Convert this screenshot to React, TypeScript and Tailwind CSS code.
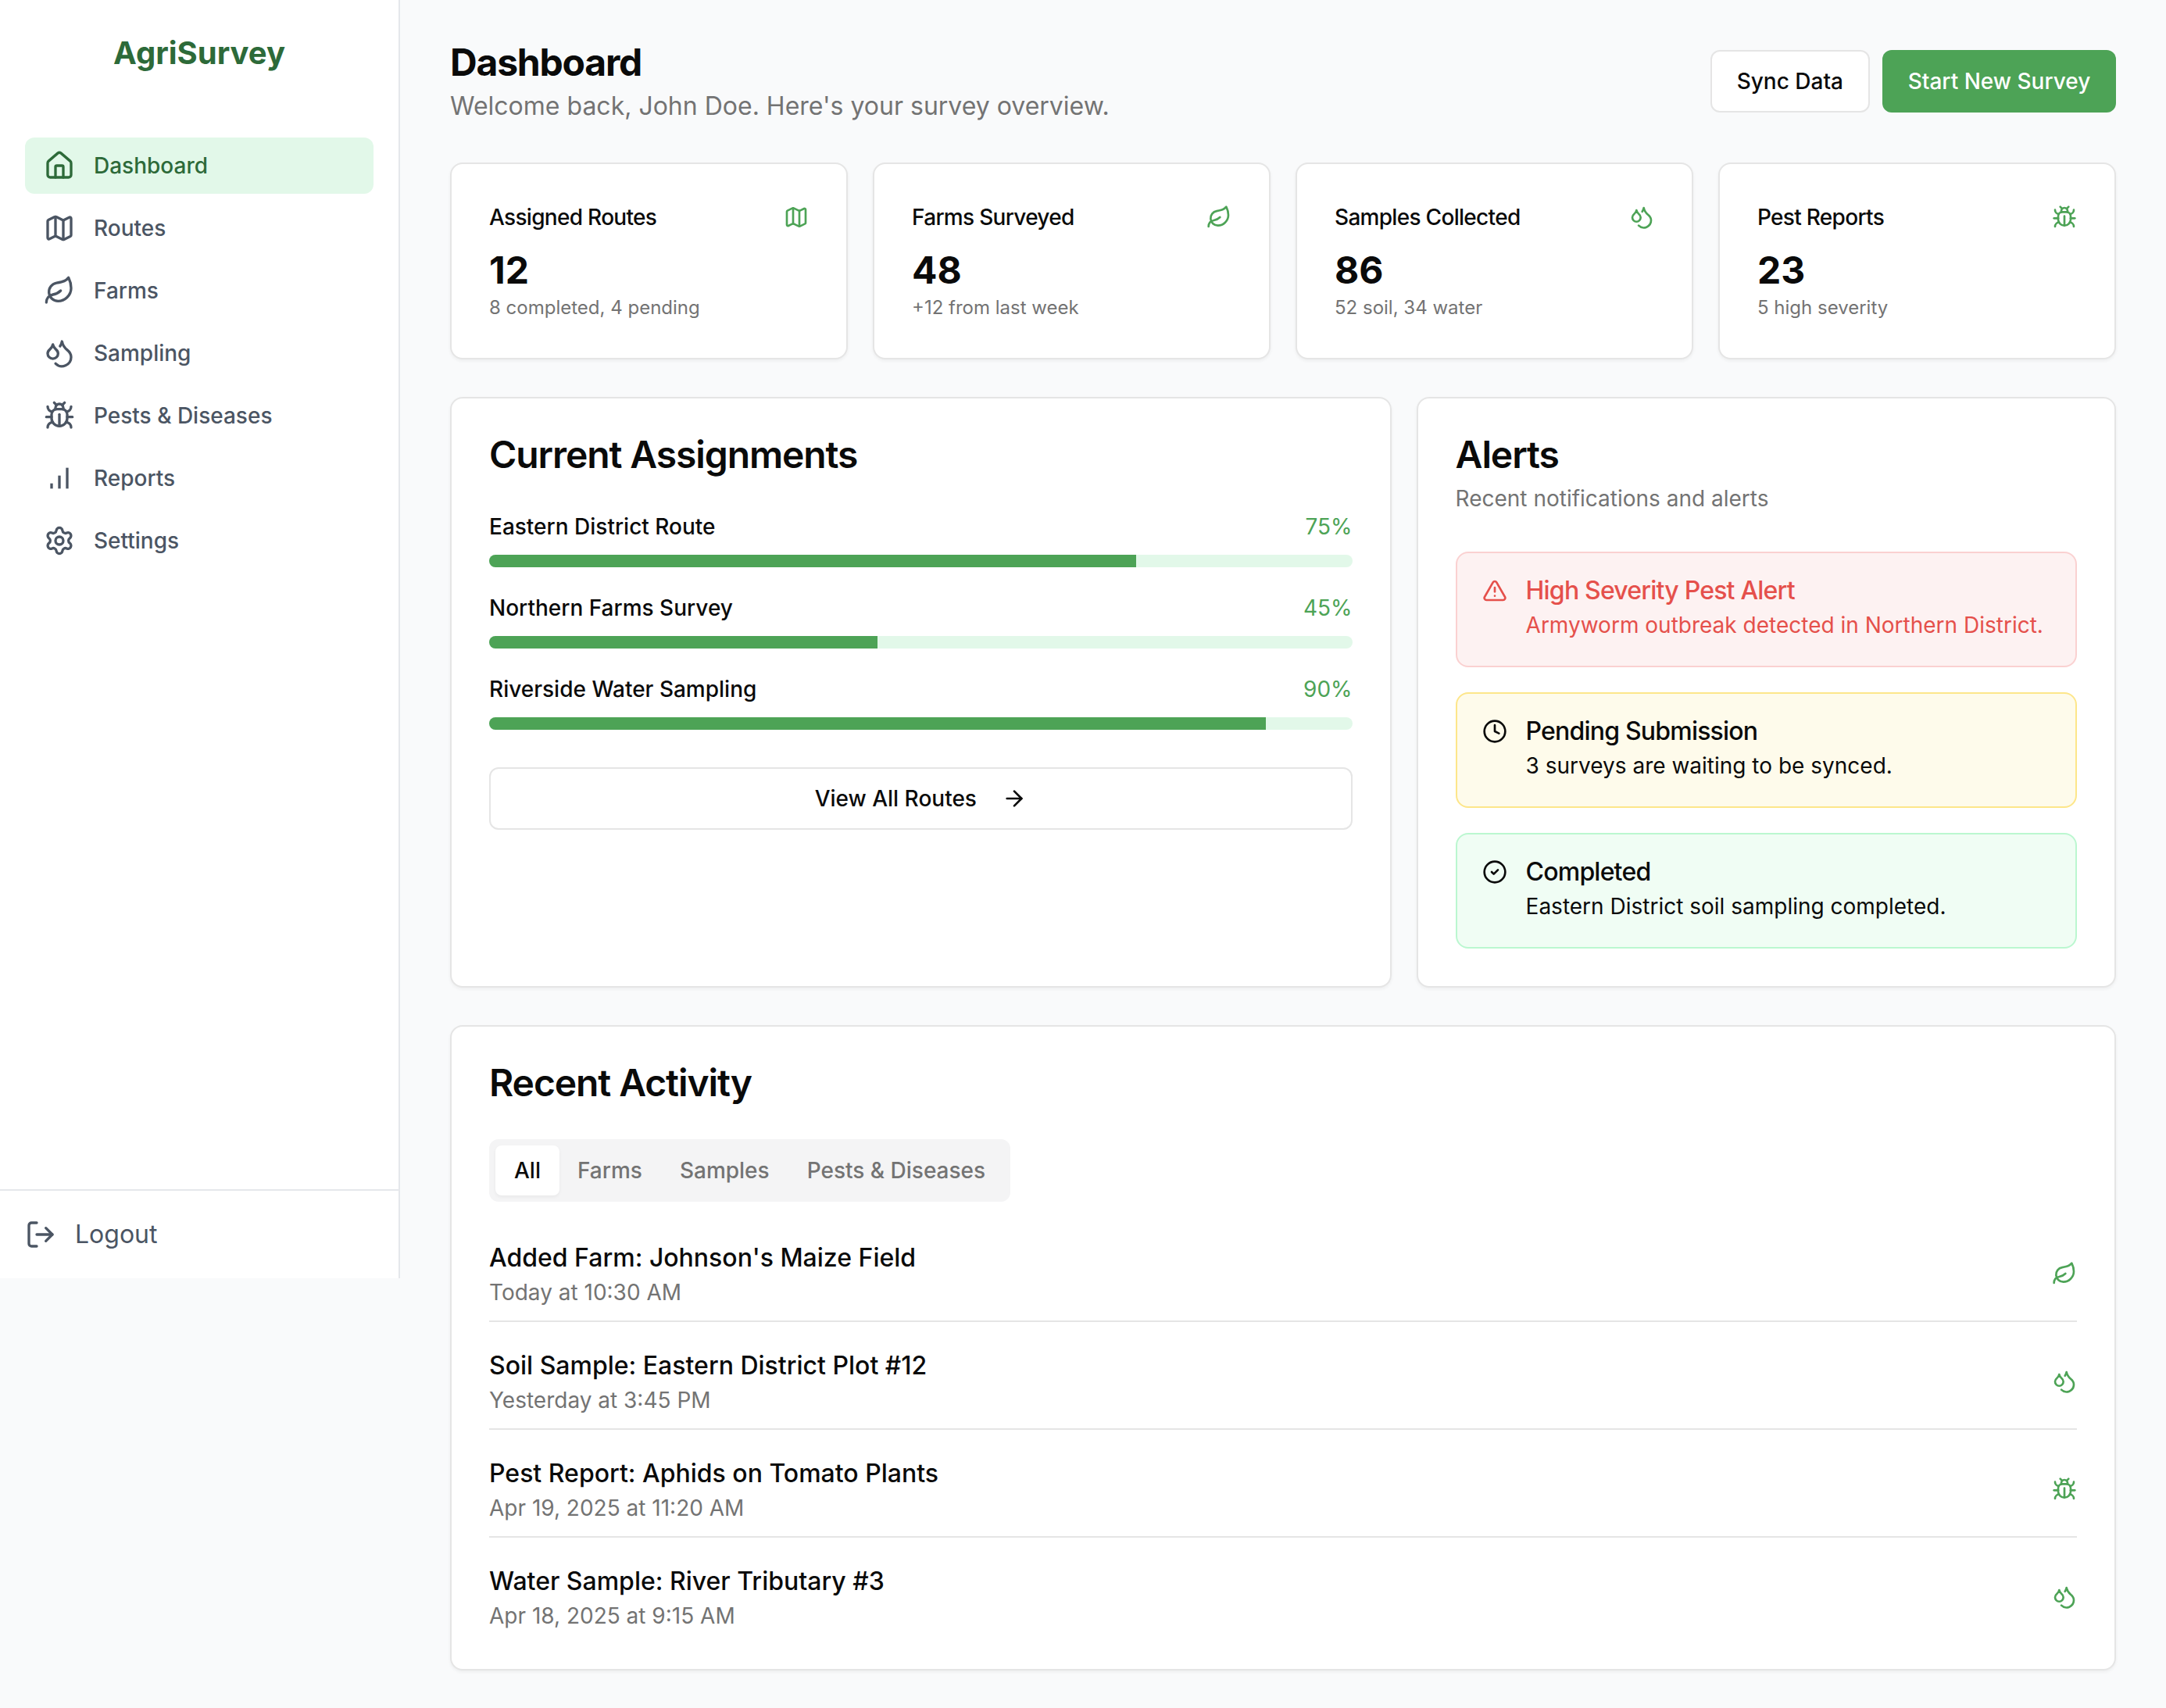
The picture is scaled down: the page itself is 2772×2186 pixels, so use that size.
import {
  ArrowRight,
  Bug,
  CircleCheck,
  Clock,
  Droplets,
  House,
  Leaf,
  LogOut,
  Map as MapIcon,
  Settings,
  TriangleAlert,
} from 'lucide-react';

// older lucide bar-chart, the three bars are x=6/12/18
function ReportsIcon({ className }: { className?: string }) {
  return (
    <svg className={className} viewBox="0 0 24 24" fill="none" stroke="currentColor" strokeWidth="2">
      <path d="M12 20V10" />
      <path d="M18 20V4" />
      <path d="M6 20v-4" />
    </svg>
  );
}

const navItems = [
  { label: 'Dashboard', icon: House, active: true },
  { label: 'Routes', icon: MapIcon },
  { label: 'Farms', icon: Leaf },
  { label: 'Sampling', icon: Droplets },
  { label: 'Pests & Diseases', icon: Bug },
  { label: 'Reports', icon: ReportsIcon },
  { label: 'Settings', icon: Settings },
];

const stats = [
  { title: 'Assigned Routes', value: '12', note: '8 completed, 4 pending', icon: MapIcon },
  { title: 'Farms Surveyed', value: '48', note: '+12 from last week', icon: Leaf },
  { title: 'Samples Collected', value: '86', note: '52 soil, 34 water', icon: Droplets },
  { title: 'Pest Reports', value: '23', note: '5 high severity', icon: Bug },
];

const assignments = [
  { name: 'Eastern District Route', progress: 75 },
  { name: 'Northern Farms Survey', progress: 45 },
  { name: 'Riverside Water Sampling', progress: 90 },
];

const activity = [
  { title: "Added Farm: Johnson's Maize Field", time: 'Today at 10:30 AM', icon: Leaf },
  { title: 'Soil Sample: Eastern District Plot #12', time: 'Yesterday at 3:45 PM', icon: Droplets },
  { title: 'Pest Report: Aphids on Tomato Plants', time: 'Apr 19, 2025 at 11:20 AM', icon: Bug },
  { title: 'Water Sample: River Tributary #3', time: 'Apr 18, 2025 at 9:15 AM', icon: Droplets },
];

function Sidebar() {
  return (
    <aside className="flex h-[1636px] w-[512px] shrink-0 flex-col border-r-2 border-[#e5e7eb] bg-white">
      <div className="pt-10 text-center text-[40px] leading-[56px] font-bold text-[#2d6a39]">AgriSurvey</div>

      <nav className="flex flex-1 flex-col gap-2 px-8 pt-20">
        {navItems.map((item) => (
          <a
            key={item.label}
            className={`flex h-[72px] items-center gap-6 rounded-xl px-6 text-[28px] leading-10 font-medium ${
              item.active ? 'bg-[#e2f8e9] text-[#2d6a39]' : 'text-[#4b5563]'
            }`}
          >
            <item.icon className="h-10 w-10" />
            {item.label}
          </a>
        ))}
      </nav>

      <div className="border-t-2 border-[#e5e7eb] p-8">
        <button className="flex h-12 items-center gap-6 text-[32px] text-[#4b5563]">
          <LogOut className="h-10 w-10" />
          Logout
        </button>
      </div>
    </aside>
  );
}

function StatCard({ title, value, note, icon: Icon }: (typeof stats)[number]) {
  return (
    <div className="rounded-2xl border-2 border-[#e5e5e5] bg-white p-12 shadow-[0_2px_4px_rgba(0,0,0,0.05)]">
      <div className="mb-4 flex items-center justify-between">
        <span className="text-[28px] leading-10 font-medium tracking-tight text-[#0a0a0a]">{title}</span>
        <Icon className="h-8 w-8 text-[#4da356]" />
      </div>
      <div className="text-[48px] leading-16 font-bold text-[#0a0a0a]">{value}</div>
      <div className="text-2xl leading-8 text-[#737373]">{note}</div>
    </div>
  );
}

function AlertBox({
  title,
  text,
  icon: Icon,
  className,
}: {
  title: string;
  text: string;
  icon: typeof Clock;
  className: string;
}) {
  return (
    <div className={`flex gap-[24px] rounded-2xl border-2 p-8 ${className}`}>
      <Icon className="h-8 w-8 shrink-0" />
      <div>
        <div className="text-[32px] leading-8 font-medium tracking-tight">{title}</div>
        <div className="mt-2 text-[28px] leading-10">{text}</div>
      </div>
    </div>
  );
}

export default function App() {
  return (
    <div className="flex min-h-[2186px] items-start bg-[#f9fafb] font-['Inter',sans-serif]">
      <Sidebar />

      <main className="min-w-0 flex-1 px-16 py-12">
        {/* Header */}
        <div className="mb-12 flex items-center justify-between">
          <div>
            <h1 className="text-[48px] leading-16 font-bold tracking-tight text-[#0a0a0a]">Dashboard</h1>
            <p className="text-[32px] leading-12 text-[#737373]">Welcome back, John Doe. Here's your survey overview.</p>
          </div>
          <div className="flex gap-4">
            <button className="h-20 rounded-xl border-2 border-[#e5e5e5] bg-white px-8 text-[28px] font-medium text-[#0a0a0a]">
              Sync Data
            </button>
            <button className="h-20 w-[299px] rounded-xl bg-[#4da356] text-[28px] font-medium text-white">Start New Survey</button>
          </div>
        </div>

        <div className="mb-12 grid grid-cols-4 gap-8">
          {stats.map((s) => (
            <StatCard key={s.title} {...s} />
          ))}
        </div>

        <div className="mb-12 grid grid-cols-7 gap-8">
          {/* Current Assignments */}
          <div className="col-span-4 rounded-2xl border-2 border-[#e5e5e5] bg-white p-12 shadow-[0_2px_4px_rgba(0,0,0,0.05)]">
            <h2 className="text-[48px] leading-12 font-semibold tracking-[-1.1px] text-[#0a0a0a]">Current Assignments</h2>
            <div className="mt-12 flex flex-col gap-8">
              {assignments.map((a) => (
                <div key={a.name}>
                  <div className="mb-4 flex justify-between text-[28px] leading-10">
                    <span className="font-medium text-[#0a0a0a]">{a.name}</span>
                    <span className="text-[#4da356]">{a.progress}%</span>
                  </div>
                  <div className="h-4 overflow-hidden rounded-full bg-[#e2f8e9]">
                    <div className="h-full bg-[#4da356]" style={{ width: `${a.progress}%` }} />
                  </div>
                </div>
              ))}
            </div>
            <button className="mt-12 flex h-20 w-full items-center justify-center gap-8 rounded-xl border-2 border-[#e5e5e5] bg-white text-[28px] font-medium text-[#0a0a0a]">
              View All Routes
              <ArrowRight className="h-8 w-8" />
            </button>
          </div>

          {/* Alerts */}
          <div className="col-span-3 rounded-2xl border-2 border-[#e5e5e5] bg-white p-12 shadow-[0_2px_4px_rgba(0,0,0,0.05)]">
            <h2 className="text-[48px] leading-12 font-semibold tracking-[-1.1px] text-[#0a0a0a]">Alerts</h2>
            <p className="mt-3 text-[28px] leading-10 text-[#737373]">Recent notifications and alerts</p>
            <div className="mt-12 flex flex-col gap-8">
              <AlertBox
                title="High Severity Pest Alert"
                text="Armyworm outbreak detected in Northern District."
                icon={TriangleAlert}
                className="border-[#fad1d1] bg-[#fdf2f2] text-[#e5504b]"
              />
              <AlertBox
                title="Pending Submission"
                text="3 surveys are waiting to be synced."
                icon={Clock}
                className="border-[#fde68a] bg-[#fefbeb] text-[#0a0a0a]"
              />
              <AlertBox
                title="Completed"
                text="Eastern District soil sampling completed."
                icon={CircleCheck}
                className="border-[#bbf7d0] bg-[#f0fdf4] text-[#0a0a0a]"
              />
            </div>
          </div>
        </div>

        {/* Recent Activity */}
        <div className="rounded-2xl border-2 border-[#e5e5e5] bg-white p-12 shadow-[0_2px_4px_rgba(0,0,0,0.05)]">
          <h2 className="text-[48px] leading-12 font-semibold tracking-[-1.1px] text-[#0a0a0a]">Recent Activity</h2>
          <div className="mt-12 inline-flex h-20 items-center rounded-xl bg-[#f4f4f5] p-2 text-[28px] font-medium text-[#737373]">
            <span className="flex h-16 items-center rounded-lg bg-white px-6 text-[#0a0a0a] shadow-[0_2px_4px_rgba(0,0,0,0.05)]">All</span>
            <span className="pr-6 pl-[23px]">Farms</span>
            <span className="px-6">Samples</span>
            <span className="px-6">Pests &amp; Diseases</span>
          </div>
          <div className="mt-12 flex flex-col gap-8">
            {activity.map((item, i) => (
              <div
                key={item.title}
                className={`flex items-center justify-between ${i < activity.length - 1 ? 'border-b-2 border-[#e5e5e5] pb-4' : ''}`}
              >
                <div>
                  <div className="text-[32px] leading-12 font-medium text-[#0a0a0a]">{item.title}</div>
                  <div className="text-[28px] leading-10 text-[#737373]">{item.time}</div>
                </div>
                <item.icon className="h-8 w-8 text-[#4da356]" />
              </div>
            ))}
          </div>
        </div>
      </main>
    </div>
  );
}
